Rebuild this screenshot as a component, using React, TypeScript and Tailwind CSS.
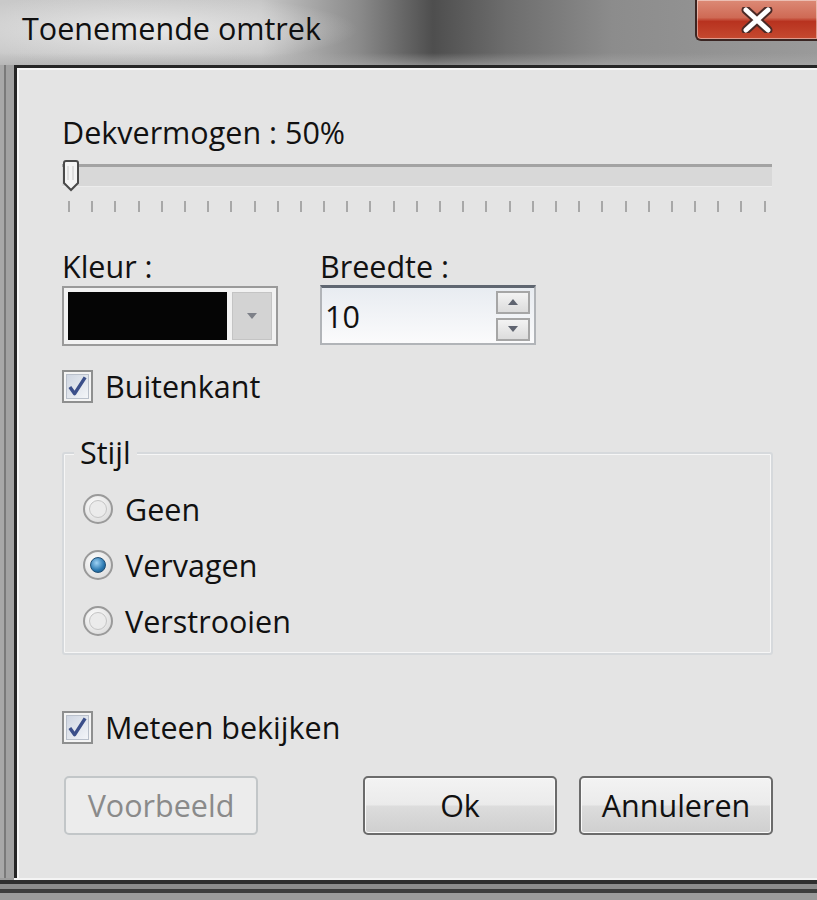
import React from 'react'

const font = { fontFamily: '"Open Sans", "Noto Sans", sans-serif' }

function CheckBox({ label }: { label: string }) {
    return (
        <div className="flex items-center gap-[12px]">
            <div className="w-[31px] h-[33px] border-2 border-[#8e8f8f] bg-[#f4f4f4] p-[2px]">
                <div className="w-full h-full bg-[linear-gradient(135deg,#cfd6e2,#f3f5f8)] border border-[#b9c0cb] flex items-center justify-center">
                    <svg width="22" height="23" viewBox="0 0 22 23">
                        <path d="M3 12 L8 19 L19 2" fill="none" stroke="#3b4f8a" strokeWidth="3.6" strokeLinejoin="round" />
                    </svg>
                </div>
            </div>
            <span className="text-[30.5px] leading-[36px] text-[#111]">{label}</span>
        </div>
    )
}

function Radio({ label, checked }: { label: string; checked?: boolean }) {
    return (
        <div className="flex items-center gap-[12px]">
            <div className="w-[30px] h-[30px] rounded-full border-2 border-[#9a9a9a] bg-[radial-gradient(circle_at_40%_35%,#ffffff,#d4d4d4)] flex items-center justify-center">
                {checked ? (
                    <div className="w-[16px] h-[16px] rounded-full border border-[#1e4e74] bg-[radial-gradient(circle_at_40%_35%,#9fd3f5,#2a78b0_60%,#174d78)]" />
                ) : (
                    <div className="w-[18px] h-[18px] rounded-full border border-[#c4c4c4] bg-[#ebebeb]" />
                )}
            </div>
            <span className="text-[30.5px] leading-[36px] text-[#111]">{label}</span>
        </div>
    )
}

function Button({ label, disabled }: { label: string; disabled?: boolean }) {
    return (
        <div
            className={
                disabled
                    ? 'w-[194px] h-[59px] rounded-[5px] border-2 border-[#c2c6c8] bg-[#ececec] flex items-center justify-center text-[30.5px] text-[#8a8a8a]'
                    : 'w-[194px] h-[59px] rounded-[5px] border-2 border-[#6b6b6b] bg-[linear-gradient(#f3f3f3,#ebebeb_48%,#dcdcdc_52%,#cfcfcf)] flex items-center justify-center text-[30.5px] text-[#111] shadow-[inset_0_0_0_1px_#fafafa]'
            }
        >
            {label}
        </div>
    )
}

export default function App() {
    const ticks = Array.from({ length: 31 })

    return (
        <div className="w-[817px] h-[900px] flex flex-col overflow-hidden bg-[#9c9c9c]" style={font}>
            {/* Title bar */}
            <div className="relative h-[65px] shrink-0 bg-[linear-gradient(90deg,#c9c9c9_0%,#c6c6c6_32%,#8a8a8a_44%,#4e4e4e_53%,#6d6d6d_62%,#8c8c8c_75%,#9a9a9a_100%)]">
                <div className="absolute left-0 top-0 h-full w-[360px] bg-[radial-gradient(ellipse_at_40%_45%,rgba(235,235,235,0.9),rgba(220,220,220,0)_70%)]" />
                <div className="absolute left-0 right-0 bottom-0 h-[12px] bg-[linear-gradient(rgba(170,170,170,0),rgba(170,170,170,0.6))]" />
                <div className="relative pl-[22px] pt-[8px] text-[30.5px] leading-[40px] text-[#101010]">Toenemende omtrek</div>
                <div className="absolute right-0 top-0 w-[122px] h-[41px] rounded-bl-[6px] border-l-2 border-b-2 border-[#3a2522] bg-[linear-gradient(#dc8a76,#cf6a55_45%,#b8321f_55%,#c54a30)] flex items-center justify-center shadow-[inset_0_0_0_1px_rgba(255,255,255,0.45)]">
                    <svg width="34" height="26" viewBox="0 0 34 26">
                        <path d="M6 3 L28 23 M28 3 L6 23" stroke="#4a2a26" strokeWidth="9" strokeLinecap="round" />
                        <path d="M6 3 L28 23 M28 3 L6 23" stroke="#ffffff" strokeWidth="5" strokeLinecap="round" />
                    </svg>
                </div>
            </div>

            <div className="flex-1 flex">
                {/* Left frame */}
                <div className="w-[14px] shrink-0 flex">
                    <div className="w-[4px] bg-[#a8a8a8]" />
                    <div className="w-[2px] bg-[#7a7a7a]" />
                    <div className="flex-1 bg-[#a2a2a2]" />
                </div>

                {/* Client area */}
                <div className="flex-1 border-l-[3px] border-t-[3px] border-[#262626] flex">
                    <div className="flex-1 border-l-2 border-t-2 border-[#f7f7f7] bg-[#e4e4e4] flex flex-col pl-[43px] pt-[44px]">
                        <div className="text-[30.5px] leading-[36px] text-[#111]">Dekvermogen : 50%</div>

                        {/* Slider */}
                        <div className="relative mt-[10px] w-[710px] h-[32px]">
                            <div className="absolute left-0 right-0 top-[4px] h-[23px] border-t-[3px] border-[#a3a3a3] bg-[#d8d8d8] border-b border-b-[#ececec]" />
                            <svg className="absolute left-0 top-0" width="18" height="32" viewBox="0 0 18 32">
                                <path d="M2 3 Q2 1 4 1 L14 1 Q16 1 16 3 L16 23 L9 30 L2 23 Z" fill="#f4f4f4" stroke="#4a4a4a" strokeWidth="2" />
                                <path d="M6 6 L6 20 M11 6 L11 20" stroke="#c8c8c8" strokeWidth="1" />
                            </svg>
                        </div>
                        <div className="mt-[9px] w-[710px] px-[6px] flex justify-between">
                            {ticks.map((_, i) => (
                                <div key={i} className="w-[2px] h-[11px] bg-[#a8a8a8]" />
                            ))}
                        </div>

                        {/* Kleur / Breedte */}
                        <div className="mt-[36px] flex gap-[42px]">
                            <div className="flex flex-col gap-[2px]">
                                <div className="text-[30.5px] leading-[36px] text-[#111]">Kleur :</div>
                                <div className="w-[216px] h-[60px] border-2 border-[#9a9a9a] bg-[#f2f2f2] p-[4px] flex gap-[5px]">
                                    <div className="flex-1 bg-[#050505]" />
                                    <div className="w-[40px] border border-[#c4c4c4] bg-[#d3d3d3] flex items-center justify-center">
                                        <svg width="12" height="8" viewBox="0 0 12 8">
                                            <path d="M1 1 L11 1 L6 7 Z" fill="#7d8088" />
                                        </svg>
                                    </div>
                                </div>
                            </div>
                            <div className="flex flex-col gap-[1px]">
                                <div className="text-[30.5px] leading-[36px] text-[#111]">Breedte :</div>
                                <div className="w-[216px] h-[60px] border-2 border-t-[3px] border-[#b1b4b8] border-t-[#5f6670] bg-[linear-gradient(#e8ecf1,#fbfbfc)] flex items-center pl-[3px] pr-[4px]">
                                    <span className="flex-1 text-[30.5px] leading-[36px] text-[#111]">10</span>
                                    <div className="flex flex-col gap-[4px]">
                                        <div className="w-[34px] h-[23px] border-2 border-[#a6a6a6] bg-[linear-gradient(#f3f3f3,#dcdcdc)] flex items-center justify-center">
                                            <svg width="12" height="8" viewBox="0 0 12 8">
                                                <path d="M1 7 L11 7 L6 1 Z" fill="#5f6470" />
                                            </svg>
                                        </div>
                                        <div className="w-[34px] h-[23px] border-2 border-[#a6a6a6] bg-[linear-gradient(#f3f3f3,#dcdcdc)] flex items-center justify-center">
                                            <svg width="12" height="8" viewBox="0 0 12 8">
                                                <path d="M1 1 L11 1 L6 7 Z" fill="#5f6470" />
                                            </svg>
                                        </div>
                                    </div>
                                </div>
                            </div>
                        </div>

                        <div className="mt-[22px]">
                            <CheckBox label="Buitenkant" />
                        </div>

                        {/* Stijl group */}
                        <div className="relative mt-[48px] w-[711px] h-[203px] border-2 border-[#d6d9dc] rounded-[3px] shadow-[inset_0_0_0_1px_#f6f6f6] pl-[19px] pt-[37px] flex flex-col gap-[20px]">
                            <div className="absolute left-[10px] top-[-20px] px-[6px] bg-[#e4e4e4] text-[30.5px] leading-[36px] text-[#111]">Stijl</div>
                            <Radio label="Geen" />
                            <Radio label="Vervagen" checked />
                            <Radio label="Verstrooien" />
                        </div>

                        <div className="mt-[54px]">
                            <CheckBox label="Meteen bekijken" />
                        </div>

                        <div className="mt-[31px] w-[711px] flex">
                            <div className="ml-[2px]">
                                <Button label="Voorbeeld" disabled />
                            </div>
                            <div className="ml-auto flex gap-[22px]">
                                <Button label="Ok" />
                                <Button label="Annuleren" />
                            </div>
                        </div>
                    </div>
                </div>
            </div>

            {/* Bottom frame */}
            <div className="h-[22px] shrink-0 flex flex-col">
                <div className="h-[2px] ml-[14px] bg-[#f4f4f4]" />
                <div className="h-[4px] bg-[#2e2e2e]" />
                <div className="h-[5px] bg-[#8c8c8c]" />
                <div className="h-[4px] bg-[#3c3c3c]" />
                <div className="flex-1 bg-[#9a9a9a]" />
            </div>
        </div>
    )
}
